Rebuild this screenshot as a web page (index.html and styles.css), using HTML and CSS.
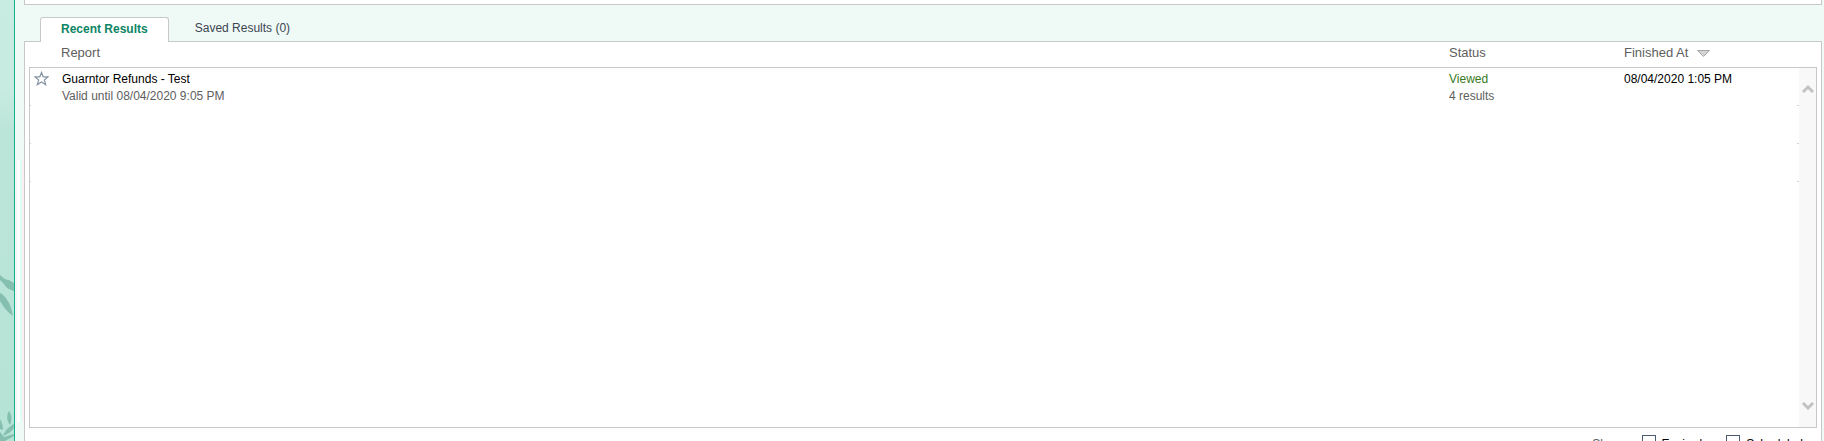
FILE: index.html
```html
<!DOCTYPE html>
<html lang="en">
<head>
<meta charset="utf-8">
<title>Report Results</title>
<link rel="stylesheet" href="styles.css">
</head>
<body>
<div class="app">
  <aside class="rail">
    <svg class="leaves" viewBox="0 0 14 180" width="14" height="180" aria-hidden="true">
      <g fill="#85bfb0">
        <path d="M0 14C3 17 6 19 9 19L14 22V30C10 29 6 27 4 23L0 19Z"/>
        <path d="M0 32C6 35 11 43 13 55C7 51 3 45 0 40Z"/>
        <path d="M9 150C6 155 7 160 10 164C12 160 12 154 9 150Z"/>
        <path d="M0 158C2 161 3 165 3 169L0 168Z"/>
        <path d="M14 163C10 165 5 169 3 175C8 173 12 170 14 167Z"/>
        <path d="M0 171L4 176L14 173V175L5 180H0Z"/>
      </g>
    </svg>
  </aside>
  <main class="content">
    <section class="upper"></section>
    <div class="tabs" role="tablist">
      <button class="tab active" role="tab" aria-selected="true">Recent Results</button>
      <button class="tab" role="tab" aria-selected="false">Saved Results (0)</button>
    </div>
    <section class="panel">
      <div class="head cols">
        <span></span>
        <span>Report</span>
        <span>Status</span>
        <span class="sorted">Finished At
          <svg viewBox="0 0 13 7" width="13" height="7" aria-hidden="true"><path d="M.5 .5H12.500L6.500 6.500Z" fill="#d4d4d4" stroke="#a6a6a6"/></svg>
        </span>
      </div>
      <div class="list">
        <div class="rows">
          <div class="row cols">
            <button class="star" aria-label="Save result">
              <svg viewBox="0 0 15 15" width="15" height="15" aria-hidden="true"><path d="M7.500 1.500L9.200 5.800L14 5.900L10.300 9L11.700 13.700L7.500 11L3.300 13.700L4.700 9L1 5.900L5.800 5.800Z" fill="#fff" stroke="#8593a3" stroke-width="1.200"/></svg>
            </button>
            <div><div class="strong">Guarntor Refunds - Test</div><div>Valid until 08/04/2020 9:05 PM</div></div>
            <div><div class="viewed">Viewed</div><div>4 results</div></div>
            <div class="strong">08/04/2020 1:05 PM</div>
          </div>
          <div class="row"></div>
          <div class="row"></div>
        </div>
        <div class="scroll">
          <button aria-label="Scroll up"><svg viewBox="0 0 12 10" width="12" height="10" aria-hidden="true"><path d="M1 8L6 3L11 8" fill="none" stroke="#c1c1c1" stroke-width="3"/></svg></button>
          <button aria-label="Scroll down"><svg viewBox="0 0 12 10" width="12" height="10" aria-hidden="true"><path d="M1 2L6 7L11 2" fill="none" stroke="#c1c1c1" stroke-width="3"/></svg></button>
        </div>
      </div>
      <div class="filters">
        <span class="show">Show:</span>
        <label class="check"><input type="checkbox">Expired</label>
        <label class="check"><input type="checkbox">Scheduled</label>
      </div>
    </section>
  </main>
</div>
</body>
</html>
```
FILE: styles.css
```css
* { box-sizing: border-box; }
body {
  margin: 0;
  height: 100vh;
  overflow: hidden;
  background: #eff9f6;
  color: #5e5e5e;
  font: 12px/17px "Liberation Sans", Arial, sans-serif;
}
button {
  margin: 0;
  padding: 0;
  border: 0;
  background: none;
  color: inherit;
  font: inherit;
}
svg { display: block; }
.app { display: flex; height: 100%; }
.rail {
  display: flex;
  flex: 0 0 15px;
  align-items: flex-end;
  border-right: 1px solid #14b08c;
  background: linear-gradient(#c9ece2 0, #c7ebe1 90px, #bce5d9 130px, #b5e3d6 100%);
}
.content {
  display: flex;
  flex: 1;
  flex-direction: column;
  min-width: 0;
  padding: 0 2px 0 9px;
  background:
    linear-gradient(90deg, #f3f5f7 2px, #fff 2px 5px, #defff3 5px 7px, #fbeff5 7px) 0 160px / 9px 262px no-repeat;
}
.upper {
  flex: 0 0 5px;
  border: 1px solid #c8c8c8;
  border-top: 0;
  background: #fff;
}
.tabs {
  position: relative;
  z-index: 1;
  display: flex;
  padding: 12px 0 0 16px;
  margin-bottom: -1px;
}
.tab {
  height: 25px;
  padding: 0 26px 2px;
  color: #3c4650;
}
.tab.active {
  padding: 0 20px 2px;
  border: 1px solid #c8c8c8;
  border-bottom: 0;
  border-radius: 3px 3px 0 0;
  background: #fff;
  color: #0d8564;
  font-weight: bold;
}
.panel {
  flex: 1 0 auto;
  padding: 0 4px;
  border: 1px solid #c8c8c8;
  border-bottom: 0;
  background: #fff;
}
.cols {
  display: grid;
  grid-template-columns: 32px minmax(0, 1fr) 175px 175px;
}
.head {
  height: 25px;
  padding-right: 18px;
  font-size: 13px;
  line-height: 22px;
}
.sorted { display: flex; align-items: center; align-self: start; gap: 9px; }
.list {
  display: flex;
  height: 361px;
  border: 1px solid #c8c8c8;
}
.rows { flex: 1; }
.row {
  height: 38px;
  padding-top: 3px;
  background:
    linear-gradient(#d0d0d0, #d0d0d0) 0 100% / 1px 1px no-repeat,
    linear-gradient(#d0d0d0, #d0d0d0) 100% 100% / 2px 1px no-repeat;
}
.strong { color: #000; }
.viewed { color: #387a1c; }
.star { justify-self: start; align-self: start; padding: 0 0 0 4px; }
.scroll {
  display: flex;
  flex: 0 0 17px;
  flex-direction: column;
  align-items: center;
  justify-content: space-between;
  padding: 16px 0 16px;
  background: #f8f8f8;
}
.filters {
  display: flex;
  justify-content: flex-end;
  padding: 7px 14px 0 0;
  line-height: 18px;
}
.check { display: flex; gap: 6px; color: #000; }
.check + .check { margin-left: 24px; }
.show { margin-right: 16px; }
.check input {
  width: 14px;
  height: 14px;
  margin: 0;
  border: 1px solid #4b5c70;
  background: #fff;
  appearance: none;
}
```
